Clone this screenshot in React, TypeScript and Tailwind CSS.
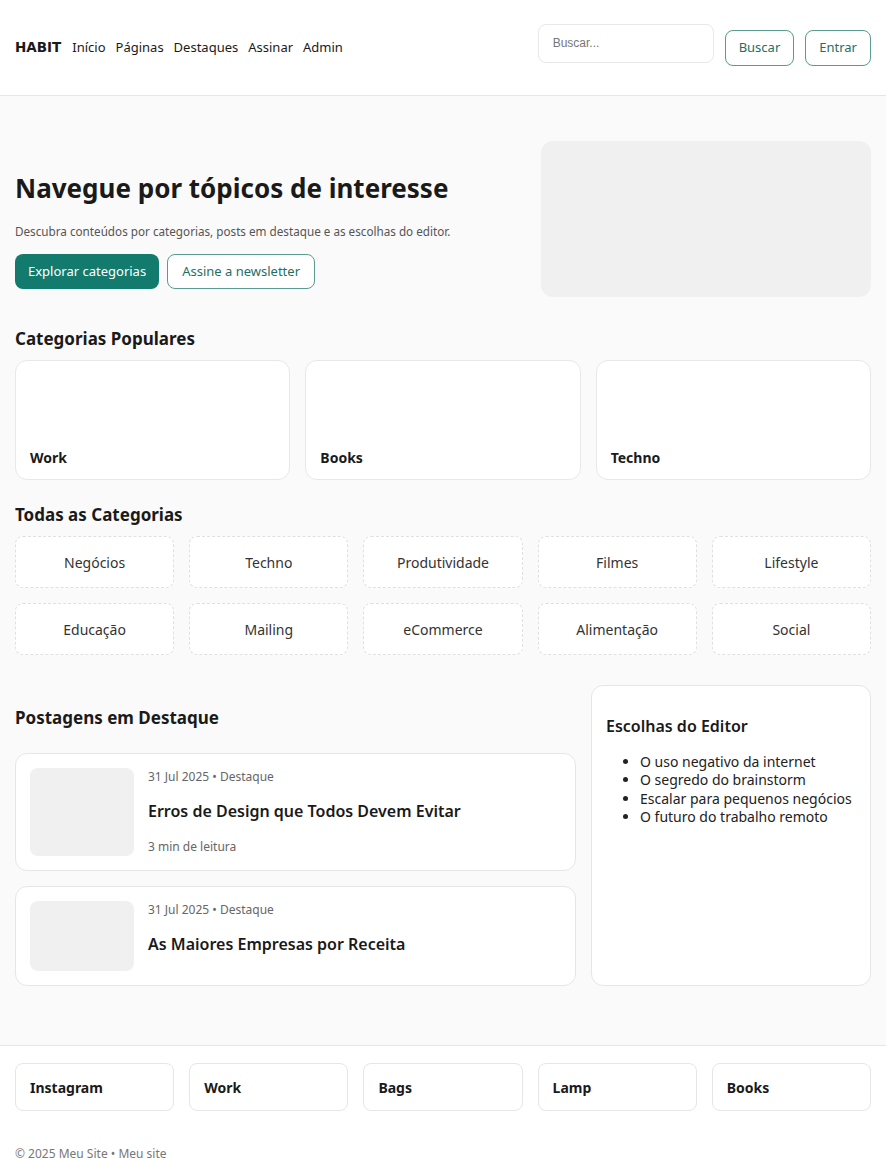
import React from "react";

const teal = "#137a6e";

export default function App() {
  const popular = ["Work", "Books", "Techno"];
  const all = [
    "Negócios",
    "Techno",
    "Produtividade",
    "Filmes",
    "Lifestyle",
    "Educação",
    "Mailing",
    "eCommerce",
    "Alimentação",
    "Social",
  ];
  const footer = ["Instagram", "Work", "Bags", "Lamp", "Books"];
  return (
    <div
      className="min-h-[1159px] bg-[#fafafa] text-[#1a1a1a]"
      style={{ fontFamily: '"Noto Sans", "Open Sans", sans-serif' }}
    >
      <header className="h-[96px] bg-white border-b border-[#e6e6e6] px-[15px] flex items-center justify-between">
        <nav className="flex items-center gap-[10px] text-[13px]">
          <span
            className="font-bold text-[13.5px] mr-[1px]"
            style={{ fontFamily: '"DejaVu Sans", sans-serif' }}
          >
            HABIT
          </span>
          <span>Início</span>
          <span>Páginas</span>
          <span>Destaques</span>
          <span>Assinar</span>
          <span>Admin</span>
        </nav>
        <div className="flex items-center gap-[11px]">
          <div className="w-[176px] h-[39px] rounded-lg border border-[#e8e8e8] bg-white px-[14px] flex items-center mb-[8px]">
            <span
              className="text-[12px] text-[#777] -mt-[2px]"
              style={{ fontFamily: '"Liberation Sans", Arial, sans-serif' }}
            >
              Buscar...
            </span>
          </div>
          <button className="h-[36px] px-[13px] rounded-lg border border-[#5a9a91] text-[13px] text-[#1f6f65] bg-white">
            Buscar
          </button>
          <button className="h-[36px] px-[13px] rounded-lg border border-[#5a9a91] text-[13px] text-[#1f6f65] bg-white">
            Entrar
          </button>
        </div>
      </header>

      <main className="px-[15px]">
        <section className="pt-[45px] flex items-center justify-between">
          <div className="pt-[22px]">
            <h1 className="text-[26px] font-bold leading-[34px]">Navegue por tópicos de interesse</h1>
            <p className="mt-[18px] text-[11.7px] text-[#555]">
              Descubra conteúdos por categorias, posts em destaque e as escolhas do editor.
            </p>
            <div className="mt-[13px] flex gap-[8px]">
              <button
                className="h-[35px] px-[13px] rounded-lg text-white text-[13px]"
                style={{ backgroundColor: teal }}
              >
                Explorar categorias
              </button>
              <button className="h-[35px] px-[14px] rounded-lg border border-[#5a9a91] text-[#1f6f65] text-[13px] bg-white">
                Assine a newsletter
              </button>
            </div>
          </div>
          <div className="w-[330px] h-[156px] rounded-xl bg-[#f0f0f0]" />
        </section>

        <h2 className="mt-[31px] text-[17px] font-bold leading-[22px]">Categorias Populares</h2>
        <div className="mt-[10px] grid grid-cols-3 gap-[15px]">
          {popular.map((p) => (
            <div
              key={p}
              className="h-[120px] rounded-xl border border-[#e8e8e8] bg-white flex items-end px-[14px] pb-[11px]"
            >
              <span className="text-[14px] font-bold">{p}</span>
            </div>
          ))}
        </div>

        <h2 className="mt-[24px] text-[17px] font-bold leading-[22px]">Todas as Categorias</h2>
        <div className="mt-[10px] grid grid-cols-5 gap-x-[15px] gap-y-[15px]">
          {all.map((c) => (
            <div
              key={c}
              className="h-[52px] rounded-lg border border-dashed border-[#e0e0e0] bg-white flex items-center justify-center text-[14px] text-[#333]"
            >
              {c}
            </div>
          ))}
        </div>

        <section className="mt-[30px] flex gap-[15px]">
          <div className="flex-1">
            <h2 className="mt-[22px] text-[17px] font-bold leading-[22px]">Postagens em Destaque</h2>
            <div className="mt-[24px] flex flex-col gap-[15px]">
              <div className="rounded-xl border border-[#e6e6e6] bg-white p-[14px] flex gap-[14px]">
                <div className="w-[104px] h-[88px] rounded-lg bg-[#f0f0f0] shrink-0" />
                <div className="flex flex-col">
                  <span className="text-[12px] text-[#666] leading-[18px]">31 Jul 2025 • Destaque</span>
                  <span className="mt-[15px] text-[16px] font-semibold leading-[20px]">
                    Erros de Design que Todos Devem Evitar
                  </span>
                  <span className="mt-[17px] text-[12px] text-[#666] leading-[18px]">3 min de leitura</span>
                </div>
              </div>
              <div className="rounded-xl border border-[#e6e6e6] bg-white p-[14px] flex gap-[14px]">
                <div className="w-[104px] h-[70px] rounded-lg bg-[#f0f0f0] shrink-0" />
                <div className="flex flex-col">
                  <span className="text-[12px] text-[#666] leading-[18px]">31 Jul 2025 • Destaque</span>
                  <span className="mt-[15px] text-[16px] font-semibold leading-[20px]">
                    As Maiores Empresas por Receita
                  </span>
                </div>
              </div>
            </div>
          </div>
          <aside className="w-[280px] rounded-xl border border-[#e6e6e6] bg-white p-[14px]">
            <h3 className="mt-[15px] text-[16px] font-semibold leading-[22px]">Escolhas do Editor</h3>
            <ul className="mt-[16px] list-disc pl-[34px] text-[14px] leading-[18.4px] text-[#222]">
              <li>O uso negativo da internet</li>
              <li>O segredo do brainstorm</li>
              <li>Escalar para pequenos negócios</li>
              <li>O futuro do trabalho remoto</li>
            </ul>
          </aside>
        </section>
      </main>

      <footer className="mt-[59px] bg-white border-t border-[#e6e6e6] px-[15px] pt-[17px] pb-[4px]">
        <div className="grid grid-cols-5 gap-[15px]">
          {footer.map((f) => (
            <div
              key={f}
              className="h-[48px] rounded-lg border border-[#e6e6e6] bg-white flex items-center px-[14px] text-[14px] font-bold"
            >
              {f}
            </div>
          ))}
        </div>
        <p className="mt-[34px] text-[12px] leading-[18px] text-[#777]">© 2025 Meu Site • Meu site</p>
      </footer>
    </div>
  );
}
